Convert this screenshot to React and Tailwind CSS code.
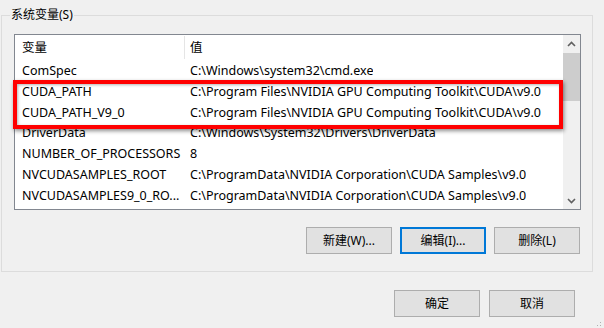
import React from "react";

const rows = [
  ["ComSpec", "C:\\Windows\\system32\\cmd.exe"],
  ["CUDA_PATH", "C:\\Program Files\\NVIDIA GPU Computing Toolkit\\CUDA\\v9.0"],
  ["CUDA_PATH_V9_0", "C:\\Program Files\\NVIDIA GPU Computing Toolkit\\CUDA\\v9.0"],
  ["DriverData", "C:\\Windows\\System32\\Drivers\\DriverData"],
  ["NUMBER_OF_PROCESSORS", "8"],
  ["NVCUDASAMPLES_ROOT", "C:\\ProgramData\\NVIDIA Corporation\\CUDA Samples\\v9.0"],
  ["NVCUDASAMPLES9_0_RO...", "C:\\ProgramData\\NVIDIA Corporation\\CUDA Samples\\v9.0"],
];

// Win10 style push button
const Button = ({ children, focused }) => (
  <button
    className={`w-[86px] h-[27px] bg-[#e1e1e1] text-[12px] text-black flex items-center justify-center ${
      focused ? "border-2 border-[#0078d7]" : "border border-[#adadad]"
    }`}
  >
    {children}
  </button>
);

const Chevron = ({ up }) => (
  <svg width="9" height="6" viewBox="0 0 9 6">
    <path
      d={up ? "M1 5 L4.5 1.5 L8 5" : "M1 1 L4.5 4.5 L8 1"}
      fill="none"
      stroke="#606060"
      strokeWidth="1.6"
    />
  </svg>
);

export default function App() {
  return (
    <div className="relative w-[604px] h-[328px] overflow-hidden bg-[#f0f0f0] text-black font-['Noto_Sans','Noto_Sans_CJK_SC',sans-serif] text-[12px]">
      {/* group box */}
      <div className="relative mt-[15px] ml-[1px] w-[592px] h-[257px] border border-[#dcdcdc] pt-[18px] pl-[12px]">
        <span className="absolute top-[-9px] left-[8px] px-[1px] leading-[16px] bg-[#f0f0f0]">
          系统变量(S)
        </span>

        {/* list view */}
        <div className="flex w-[567px] h-[176px] border border-[#828790] bg-white text-[12.5px]">
          <div className="flex-1 flex flex-col">
            <div className="flex items-center h-[26px]">
              <div className="w-[169px] pl-[7px]">变量</div>
              <div className="w-px h-[23px] bg-[#e5e5e5] self-start mt-[1px]" />
              <div className="pl-[5px]">值</div>
            </div>
            {rows.map(([name, value]) => (
              <div key={name} className="flex items-center h-[20.8px] whitespace-nowrap">
                <div className="w-[175px] pl-[7px] overflow-hidden">{name}</div>
                <div className="overflow-hidden">{value}</div>
              </div>
            ))}
          </div>
          {/* scrollbar */}
          <div className="w-[17px] bg-[#f0f0f0] flex flex-col">
            <div className="h-[18px] flex items-center justify-center">
              <Chevron up />
            </div>
            <div className="h-[48px] bg-[#cdcdcd]" />
            <div className="flex-1" />
            <div className="h-[17px] flex items-center justify-center">
              <Chevron />
            </div>
          </div>
        </div>

        <div className="flex justify-end gap-[8px] pr-[12px] mt-[17px]">
          <Button>新建(W)...</Button>
          <Button focused>编辑(I)...</Button>
          <Button>删除(L)</Button>
        </div>
      </div>

      <div className="flex justify-end gap-[9px] pr-[29px] mt-[18px]">
        <Button>确定</Button>
        <Button>取消</Button>
      </div>

      {/* red annotation box */}
      <div className="absolute left-[13px] top-[80px] w-[550px] h-[49px] border-4 border-[#ff0000] shadow-[1px_2px_4px_rgba(0,0,0,0.45),inset_1px_1px_3px_rgba(0,0,0,0.3)]" />

      {/* size grip */}
      <svg className="absolute right-[2px] bottom-0" width="8" height="7" viewBox="0 0 8 7">
        <rect x="6" y="1" width="1" height="1" fill="#b0b0b0" />
        <rect x="3" y="4" width="1" height="1" fill="#b0b0b0" />
        <rect x="6" y="4" width="1" height="1" fill="#b0b0b0" />
      </svg>
    </div>
  );
}
